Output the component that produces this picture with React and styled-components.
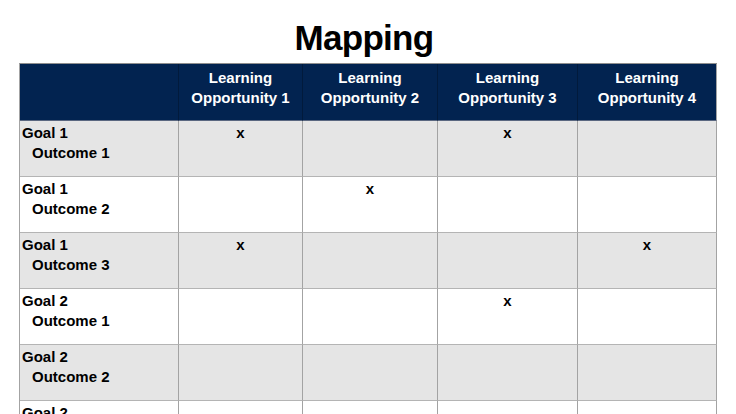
import React from "react";
import styled, { createGlobalStyle } from "styled-components";

const GlobalStyle = createGlobalStyle`
  html, body {
    margin: 0;
    padding: 0;
    background: #ffffff;
    overflow: hidden;
  }
  body {
    font-family: "Liberation Sans", Arial, Helvetica, sans-serif;
  }
`;

const Page = styled.div`
  width: 736px;
  height: 414px;
  overflow: hidden;
  display: flex;
  flex-direction: column;
  align-items: center;
  padding-top: 18px;
  box-sizing: border-box;
`;

const Title = styled.h1`
  margin: 0 8px 5px 0;
  font-size: 35px;
  line-height: 40px;
  font-weight: 700;
  letter-spacing: -0.7px;
  color: #000000;
`;

const Grid = styled.div`
  display: grid;
  grid-template-columns: 159px 124px 135px 140px 139px;
  grid-template-rows: 57px;
  grid-auto-rows: 56px;
  border-left: 1px solid #a3a3a3;
  border-top: 1px solid #8e8e8e;
  align-self: flex-start;
  margin-left: 19px;
`;

const HeadCell = styled.div`
  background: #022350;
  color: #ffffff;
  font-size: 15px;
  line-height: 20px;
  font-weight: 700;
  text-align: center;
  padding-top: 4px;
  border-right: 1px solid ${(p) => (p.$last ? "#a3a3a3" : "#011a3c")};
  border-bottom: 1px solid #5a6780;
`;

const Cell = styled.div`
  background: ${(p) => (p.$shade ? "#e5e5e5" : "#ffffff")};
  border-right: 1px solid #a3a3a3;
  border-bottom: 1px solid #b4b4b4;
  font-size: 15px;
  line-height: 20px;
  font-weight: 700;
  color: #000000;
  padding-top: 2px;
  text-align: ${(p) => (p.$label ? "left" : "center")};
  padding-left: ${(p) => (p.$label ? "2px" : "0")};
  overflow: hidden;
`;

const Outcome = styled.div`
  padding-left: 10px;
`;

const opportunities = [1, 2, 3, 4];

const rows = [
  { goal: 1, outcome: 1, marks: [1, 3] },
  { goal: 1, outcome: 2, marks: [2] },
  { goal: 1, outcome: 3, marks: [1, 4] },
  { goal: 2, outcome: 1, marks: [3] },
  { goal: 2, outcome: 2, marks: [] },
  { goal: 2, outcome: 3, marks: [] },
];

const App = () => (
  <>
    <GlobalStyle />
    <Page>
      <Title>Mapping</Title>
      <Grid>
        <HeadCell />
        {opportunities.map((n) => (
          <HeadCell key={n} $last={n === 4}>
            Learning
            <br />
            Opportunity {n}
          </HeadCell>
        ))}
        {rows.map((r, i) => (
          <React.Fragment key={i}>
            <Cell $label $shade={i % 2 === 0}>
              Goal {r.goal}
              <Outcome>Outcome {r.outcome}</Outcome>
            </Cell>
            {opportunities.map((n) => (
              <Cell key={n} $shade={i % 2 === 0}>
                {r.marks.includes(n) ? "x" : ""}
              </Cell>
            ))}
          </React.Fragment>
        ))}
      </Grid>
    </Page>
  </>
);

export default App;
